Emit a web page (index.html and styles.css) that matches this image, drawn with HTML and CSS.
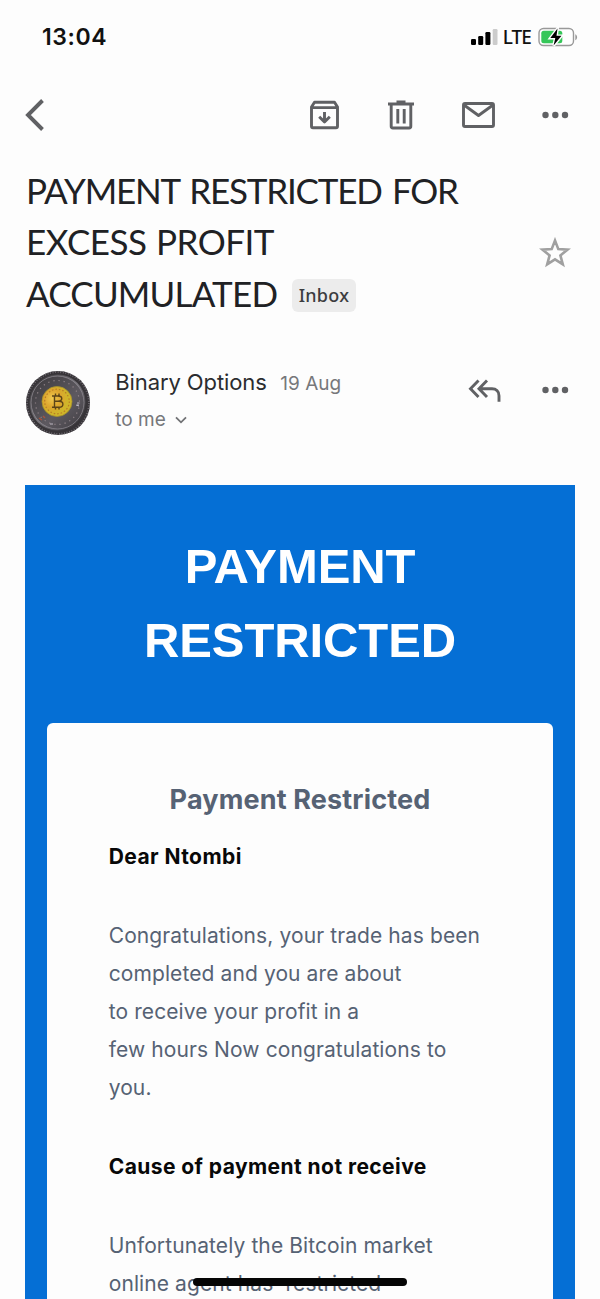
FILE: index.html
```
<!DOCTYPE html>
<html lang="en">
<head>
<meta charset="utf-8">
<title>Payment Restricted</title>
<link rel="stylesheet" href="styles.css">
</head>
<body>
<div class="screen">
  <header class="status">
    <span class="clock">13:04</span>
    <div class="status-right">
      <svg class="signal" width="27" height="18" viewBox="0 0 27 18"><g fill="#000"><rect x="0" y="11" width="5" height="6" rx="1.2"/><rect x="7.200" y="8" width="5" height="9" rx="1.2"/><rect x="14.400" y="4" width="5" height="13" rx="1.2"/></g><rect x="21.700" y="1" width="4.800" height="16" rx="1.2" fill="#ccc"/></svg>
      <span class="lte">LTE</span>
      <svg class="battery" width="40" height="20" viewBox="0 0 40 20"><rect x="1" y="1.5" width="34.5" height="17" rx="4.5" fill="#fff" stroke="#999" stroke-width="1.4"/><path d="M37.3 7.2v6c2.4-1.300 2.400-4.700 0-6z" fill="#999"/><rect x="3.300" y="3.800" width="21" height="12.400" rx="2.500" fill="#35c759"/><path d="M19.500 1.500 12.300 11h5l-1.700 7.500L23.500 8.800h-5z" fill="#000" stroke="#fff" stroke-width="2.800" paint-order="stroke"/></svg>
    </div>
  </header>

  <nav class="toolbar">
    <svg class="back" width="20" height="32" viewBox="0 0 20 32"><path d="M17.500 1.500 3 16l14.500 14.500" fill="none" stroke="#606164" stroke-width="3.900"/></svg>
    <svg class="archive" width="29" height="30" viewBox="0 0 29 30" fill="none" stroke="#606164" stroke-width="2.900" stroke-linejoin="round"><path d="M1.500 7 4.500 2.200h20L27.500 7v19.300a1.500 1.500 0 0 1-1.500 1.500H3a1.500 1.500 0 0 1-1.500-1.500zM1.500 7.600h26M14.500 12v9.500M9.200 16.700l5.300 5.200 5.300-5.200"/></svg>
    <svg class="trash" width="26" height="30" viewBox="0 0 26 30" fill="none" stroke="#606164" stroke-width="2.900"><path d="M0 4h26M8.500 2h9M3.200 4v22.300a1.700 1.700 0 0 0 1.700 1.700h16.200a1.700 1.700 0 0 0 1.700-1.700V4M9.800 9v14.500M16.200 9v14.500"/></svg>
    <svg class="envelope" width="33" height="26" viewBox="0 0 33 26" fill="none" stroke="#606164" stroke-width="2.900" stroke-linejoin="round"><rect x="1.500" y="1.500" width="30" height="23" rx="1.500"/><path d="m2 3 14.500 10.500L31 3"/></svg>
    <svg class="more" width="27" height="8" viewBox="0 0 27 8" fill="#606164"><circle cx="3.500" cy="4" r="3.200"/><circle cx="13.300" cy="4" r="3.200"/><circle cx="23" cy="4" r="3.200"/></svg>
  </nav>

  <section class="subject">
    <h1><span class="s1">PAYMENT RESTRICTED FOR</span><br><span class="s2">EXCESS PROFIT</span><br><span class="s3">ACCUMULATED</span><span class="label">Inbox</span></h1>
    <svg class="star" width="32" height="32" viewBox="0 0 32 32"><path d="m16 3.500 3.300 8.600 9.300.500-7.200 5.800 2.400 9L16 22.300l-7.800 5.100 2.400-9-7.200-5.800 9.300-.500z" fill="none" stroke="#a0a0a0" stroke-width="2.600"/></svg>
  </section>

  <section class="sender">
    <svg class="avatar" width="66" height="66" viewBox="0 0 66 66">
      <defs>
        <linearGradient id="rim" x1="0" y1="0" x2="1" y2="1"><stop offset="0" stop-color="#2b292b"/><stop offset=".5" stop-color="#77747a"/><stop offset="1" stop-color="#252326"/></linearGradient>
        <linearGradient id="face" x1="0" y1="0" x2="1" y2="1"><stop offset="0" stop-color="#3b393c"/><stop offset=".6" stop-color="#5d5960"/><stop offset="1" stop-color="#403d42"/></linearGradient>
        <radialGradient id="gold" cx=".35" cy=".4"><stop offset="0" stop-color="#f0c94e"/><stop offset=".6" stop-color="#dda52d"/><stop offset="1" stop-color="#cfb52a"/></radialGradient>
      </defs>
      <circle cx="33" cy="33" r="32" fill="#373438"/>
      <circle cx="33" cy="33" r="31" fill="none" stroke="#777279" stroke-width="2" stroke-dasharray=".8 1.800"/>
      <circle cx="32.500" cy="32.500" r="27" fill="url(#face)" stroke="url(#rim)" stroke-width="2"/>
      <circle cx="32.500" cy="32.500" r="26.500" fill="none" stroke="#8b878e" stroke-width=".8"/>
      <circle cx="32.500" cy="32.500" r="22" fill="none" stroke="#918489" stroke-width="1.200" stroke-dasharray="1.200 4"/>
      <path d="M14 48l3 2M18 46l2 2" stroke="#a5543e" stroke-width="1.500"/><path d="M51 35l3 1M53 32v4M25 54h3" stroke="#bdb7c2"/>
      <circle cx="32" cy="31.500" r="15" fill="url(#gold)" stroke="#a8922a" stroke-width=".8"/>
      <circle cx="32" cy="31.500" r="12.300" fill="none" stroke="#b97a25" stroke-width="1.200" stroke-dasharray="1.500 2"/>
      <path d="M27 26h6c5 0 5 5.200 0 5.200h-3.500 4.500c5.200 0 5.200 6 0 6h-7M29.500 26v11M30.500 23.500V26M34 23.500V26M30.500 37.500v2M34 37.500v2" fill="none" stroke="#5b4418" stroke-width="1.400"/>
    </svg>
    <div class="who">
      <div class="line1"><span class="name">Binary Options</span><span class="date">19 Aug</span></div>
      <div class="line2"><span>to me</span><svg width="12" height="8" viewBox="0 0 12 8"><path d="m1 1.300 5 5 5-5" fill="none" stroke="#717275" stroke-width="1.800"/></svg></div>
    </div>
    <svg class="reply" width="33" height="24" viewBox="0 0 33 24" fill="none" stroke="#606164" stroke-width="2.900"><path d="M10.500 1.500 2.500 9.700l8 8.300M19 1.500 11 9.700l8 8.300M11 9.700h13c4 0 7 2.500 7 7v6.100"/></svg>
    <svg class="dots" width="27" height="8" viewBox="0 0 27 8" fill="#606164"><circle cx="3.500" cy="4" r="3.200"/><circle cx="13.300" cy="4" r="3.200"/><circle cx="23" cy="4" r="3.200"/></svg>
  </section>

  <main class="mail">
    <h2>PAYMENT<br>RESTRICTED</h2>
    <article class="card">
      <h3>Payment Restricted</h3>
      <p class="strong greeting">Dear Ntombi</p>
      <p>Congratulations, your trade has been<br>completed and you are about<br>to receive your profit in a<br>few hours Now congratulations to<br>you.</p>
      <p class="strong cause">Cause of payment not receive</p>
      <p>Unfortunately the Bitcoin market<br>online agent has &nbsp;restricted</p>
    </article>
  </main>
  <div class="home-indicator"></div>
</div>
</body>
</html>
```
FILE: styles.css
```
* { box-sizing: border-box; }
body { margin: 0; background: #fdfdfd; font-family: Inter, "Liberation Sans", sans-serif; }
svg { display: block; flex: none; }
h1, h2, h3, p { margin: 0; font-weight: 400; }
.screen { position: relative; width: 600px; height: 1299px; overflow: hidden; display: flex; flex-direction: column; }

.status { height: 74px; padding: 0 22px 0 42px; display: flex; justify-content: space-between; align-items: center; flex: none; }
.clock { font-size: 23px; font-weight: 600; letter-spacing: 0.6px; color: #111; }
.status-right { display: flex; align-items: center; }
.lte { font: 500 19px/24px "Noto Sans", sans-serif; color: #111; margin: 0 7px 0 5px; letter-spacing: -0.9px; }

.toolbar { height: 82px; padding: 0 31px 0 25px; display: flex; align-items: center; flex: none; }
.back { margin-right: auto; }
.trash { margin-left: 49px; }
.envelope { margin-left: 47.500px; }
.more { margin-left: 47.500px; }

.subject { height: 180px; padding: 9px 29px 0 26px; display: flex; justify-content: space-between; flex: none; }
h1 { font: 400 35px/51.300px Lato, sans-serif; color: #202124; white-space: nowrap; }
.s1 { letter-spacing: -1.2px; word-spacing: 2.500px; }
.s2 { letter-spacing: -0.5px; word-spacing: 1px; }
.s3 { letter-spacing: -0.8px; }
.label { display: inline-block; margin-left: 15px; padding: 0 6.500px; height: 33px; border-radius: 6px; background: #ececec; color: #3c3d40; font: 500 18px/33px "Noto Sans", sans-serif; letter-spacing: 0.25px; vertical-align: 5px; }
.star { margin-top: 72px; }

.sender { height: 149px; padding: 0 31px 0 25px; display: flex; align-items: flex-start; flex: none; }
.avatar { margin-top: 34px; }
.who { margin: 31px auto 0 24.300px; }
.line1 { height: 30px; line-height: 30px; white-space: nowrap; }
.name { font-size: 22px; color: #2b2c2f; letter-spacing: -0.1px; }
.date { font-size: 19px; color: #77787b; margin-left: 13.500px; }
.line2 { margin-top: 8.500px; display: flex; align-items: center; gap: 9px; font-size: 19px; line-height: 28px; color: #77787b; }
.reply { margin-top: 43px; margin-right: 41px; }
.dots { margin-top: 50px; }

.mail { margin: 0 25px; height: 814px; flex: none; padding: 45px 22px 0; background: #056fd5; overflow: hidden; }
h2 { height: 193px; text-align: center; font: 700 49px/73.500px "Liberation Sans", Arial, sans-serif; letter-spacing: -0.1px; color: #fff; }
.card { height: 700px; border-radius: 6px; background: #fdfdfd; padding: 58px 61px 0; color: #566274; white-space: nowrap; }
h3 { text-align: center; font-size: 27px; font-weight: 700; line-height: 38px; letter-spacing: 0.15px; }
p { margin-left: 0.700px; font-size: 21px; line-height: 38.150px; letter-spacing: 0.1px; }
.strong { font-weight: 700; letter-spacing: 0.430px; color: #080808; }
.greeting { margin-top: 19px; margin-bottom: 40.500px; }
.cause { margin-top: 40.500px; margin-bottom: 40.500px; }

/* Device gesture bar, drawn over the scrolled mail */
.home-indicator { position: absolute; left: 193px; bottom: 13px; width: 214px; height: 8px; border-radius: 4px; background: #050505; }
```
